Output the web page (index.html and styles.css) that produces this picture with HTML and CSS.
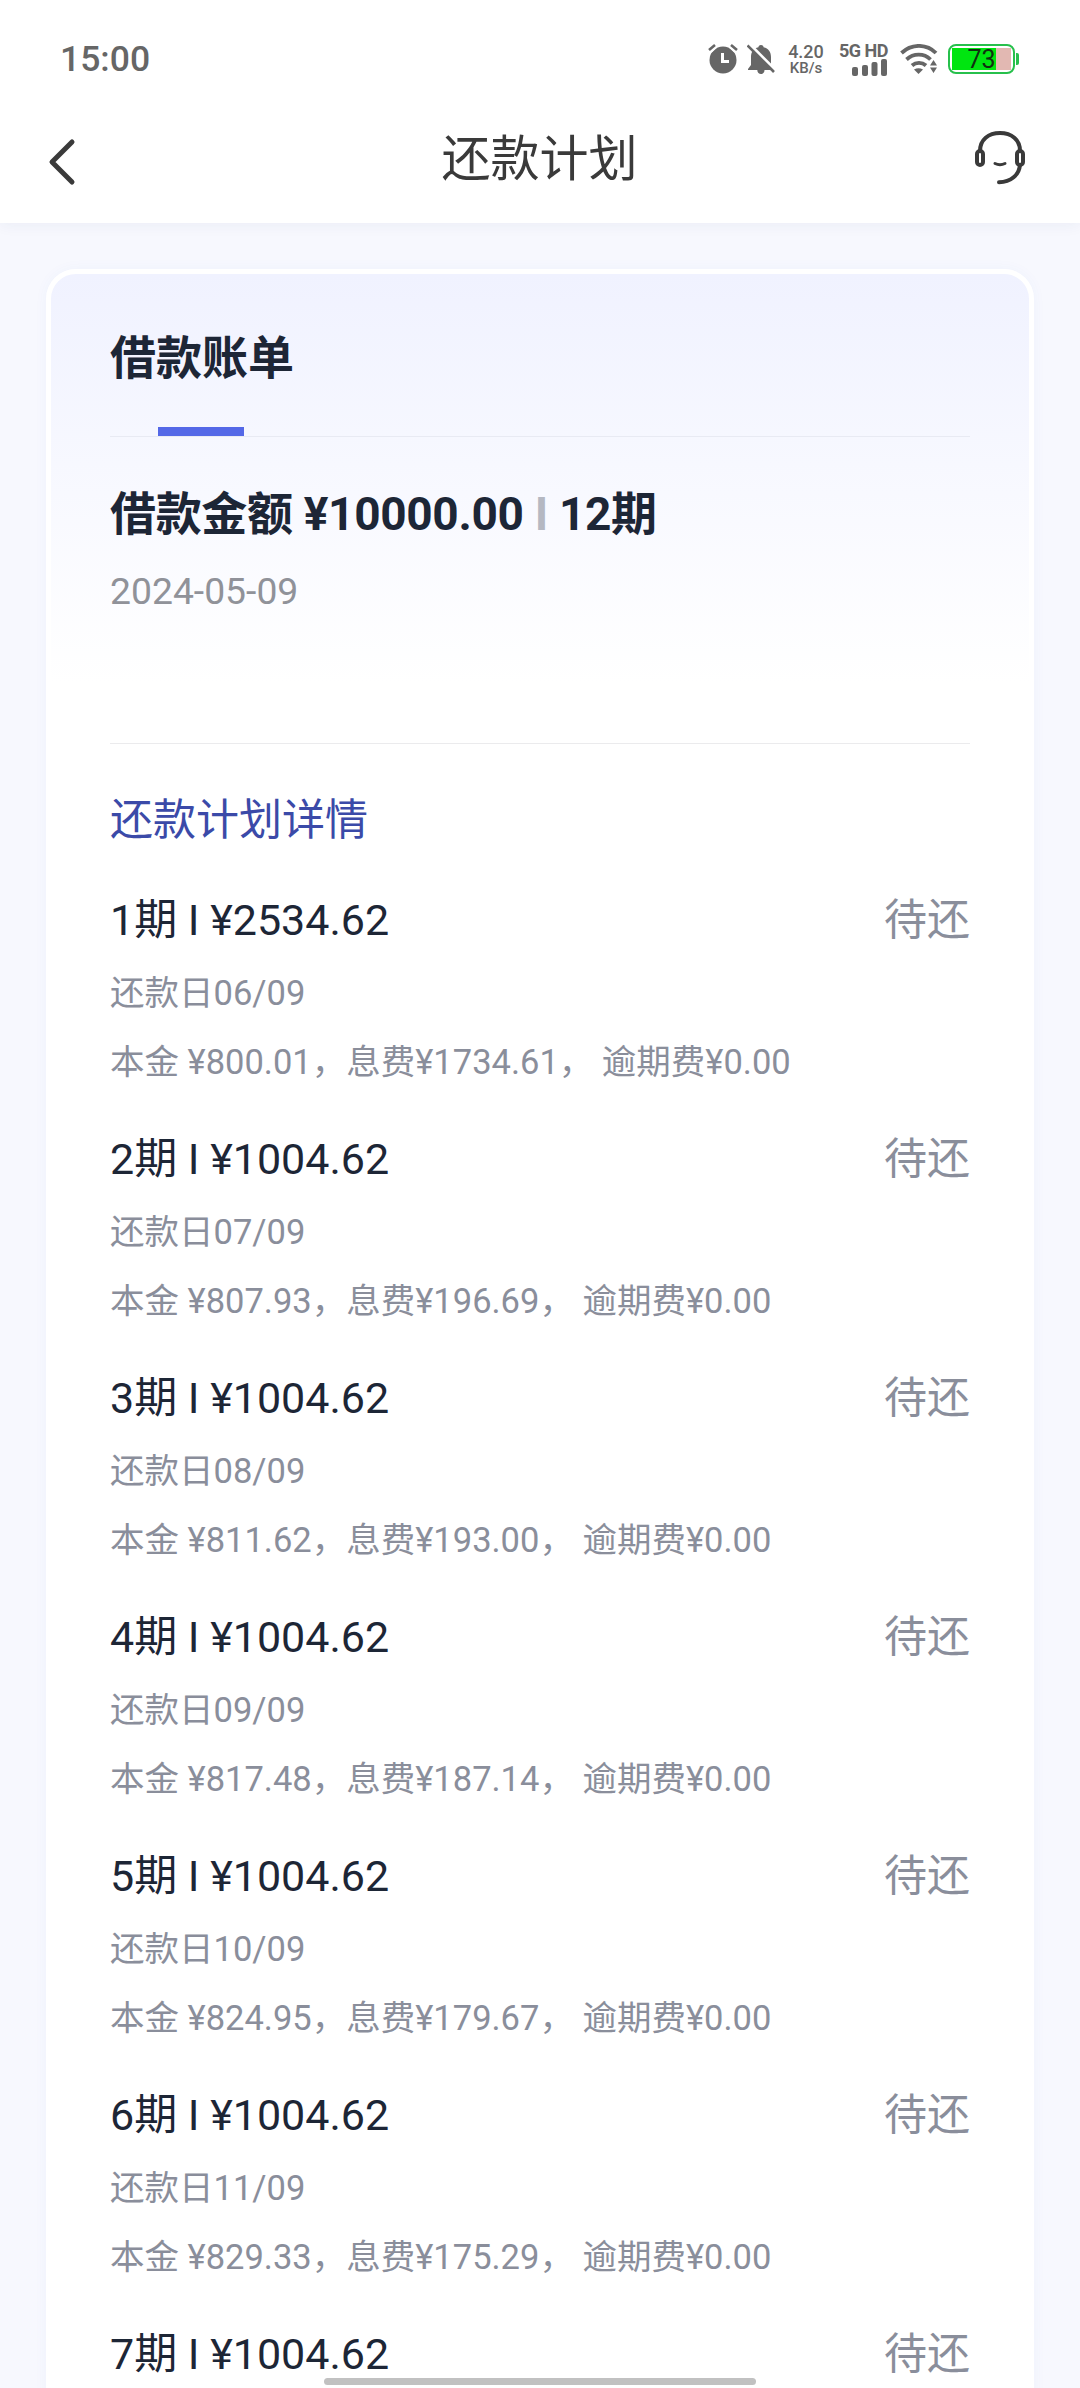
FILE: index.html
```html
<!DOCTYPE html>
<html lang="zh-CN">
<head>
    <meta charset="UTF-8">
    <meta name="viewport" content="width=device-width, initial-scale=1.0">
    <title>还款计划</title>
    <link rel="stylesheet" href="styles.css">
</head>
<body>
    <header class="header">
        <div class="status-bar">
            <span class="time">15:00</span>
            <div class="status-icons">
                <svg class="alarm" width="30" height="30" viewBox="0 0 30 30">
                    <circle cx="15" cy="16" r="13.5" fill="#666"/>
                    <path d="M1.5 6.5 7 1.5M28.5 6.5 23 1.5" stroke="#fff" stroke-width="6"/>
                    <path d="M1 6 7 1M29 6 23 1" stroke="#666" stroke-width="2.6"/>
                    <path d="M14.5 9v8.5H21" stroke="#fff" stroke-width="3" fill="none"/>
                </svg>
                <svg class="bell" width="28" height="31" viewBox="0 0 28 31">
                    <path d="M14 1c1.8 0 2.5 1 2.6 2.3C21.500 4.500 24 8 24 13v8l3 4v1H17.500c0 2.500-1.500 4-3.500 4s-3.700-1.500-3.700-4H1v-1l3-4v-8c0-5 2.500-8.500 7.400-9.700C11.500 2 12.200 1 14 1z" fill="#666"/>
                    <path d="M2.500 0 29.500 27" stroke="#fff" stroke-width="3"/>
                    <path d="M0.500 1.500 27 28" stroke="#666" stroke-width="2.6"/>
                </svg>
                <div class="speed"><span class="speed-num">4.20</span><span class="speed-unit">KB/s</span></div>
                <div class="signal">
                    <span class="signal-text">5G HD</span>
                    <svg width="36" height="17" viewBox="0 0 36 17" fill="#666">
                        <rect x="0" y="8" width="6" height="9" rx="2"/>
                        <rect x="10" y="6" width="6" height="11" rx="2"/>
                        <rect x="19.500" y="3" width="6" height="14" rx="2"/>
                        <rect x="29" y="0" width="6" height="17" rx="2"/>
                    </svg>
                </div>
                <svg class="wifi" width="38" height="30" viewBox="0 0 38 30">
                    <path d="M1.500 9C11.500-.5 26.500-.5 36 9M6.500 15.500C13.500 9 24 9 30.500 15.500M12 21.500c4-3.500 10-3.500 14 0" fill="none" stroke="#666" stroke-width="3.800"/>
                    <path d="M14 25.500q4.500-2.500 9 0L18.500 30z" fill="#666"/>
                    <path d="M28.500 23 33.500 14 39 23z" fill="#fff"/>
                    <path d="M30 21.500 33.500 16 37 21.500zM30 23.500h7L33.500 29z" fill="#666"/>
                </svg>
                <div class="battery"><span class="battery-level">73</span></div>
            </div>
        </div>
        <div class="nav">
            <svg class="back" width="28" height="48" viewBox="0 0 28 48">
                <path d="M24 4 4 24l20 20" fill="none" stroke="#3a3a3a" stroke-width="5" stroke-linecap="round" stroke-linejoin="round"/>
            </svg>
            <h1>还款计划</h1>
            <svg class="service" width="52" height="56" viewBox="0 0 52 56" fill="none" stroke="#3a3a3a" stroke-width="4" stroke-linecap="round">
                <path d="M6 21C6 9.500 14.500 3 26 3s20 6.500 20 18M46 35c-1 10-9 17-21 17.300"/>
                <rect x="3" y="21" width="6" height="14" rx="3"/>
                <rect x="43" y="21" width="6" height="14" rx="3"/>
                <path d="M21 33.500q5 2.500 10 0" stroke-width="3"/>
            </svg>
        </div>
    </header>

    <main class="card">
        <div class="tab">
            <h2>借款账单</h2>
            <div class="tab-line"></div>
        </div>
        <section class="summary">
            <div class="amount">借款金额 ¥10000.00 <span class="divider">I</span> 12期</div>
            <div class="loan-date">2024-05-09</div>
        </section>
        <h3>还款计划详情</h3>
        <div class="plan">
            <div class="item">
                <div class="item-top"><span>1期 I ¥2534.62</span><span class="state">待还</span></div>
                <div class="due">还款日06/09</div>
                <div class="fees">本金 ¥800.01，息费¥1734.61， 逾期费¥0.00</div>
            </div>
            <div class="item">
                <div class="item-top"><span>2期 I ¥1004.62</span><span class="state">待还</span></div>
                <div class="due">还款日07/09</div>
                <div class="fees">本金 ¥807.93，息费¥196.69， 逾期费¥0.00</div>
            </div>
            <div class="item">
                <div class="item-top"><span>3期 I ¥1004.62</span><span class="state">待还</span></div>
                <div class="due">还款日08/09</div>
                <div class="fees">本金 ¥811.62，息费¥193.00， 逾期费¥0.00</div>
            </div>
            <div class="item">
                <div class="item-top"><span>4期 I ¥1004.62</span><span class="state">待还</span></div>
                <div class="due">还款日09/09</div>
                <div class="fees">本金 ¥817.48，息费¥187.14， 逾期费¥0.00</div>
            </div>
            <div class="item">
                <div class="item-top"><span>5期 I ¥1004.62</span><span class="state">待还</span></div>
                <div class="due">还款日10/09</div>
                <div class="fees">本金 ¥824.95，息费¥179.67， 逾期费¥0.00</div>
            </div>
            <div class="item">
                <div class="item-top"><span>6期 I ¥1004.62</span><span class="state">待还</span></div>
                <div class="due">还款日11/09</div>
                <div class="fees">本金 ¥829.33，息费¥175.29， 逾期费¥0.00</div>
            </div>
            <div class="item">
                <div class="item-top"><span>7期 I ¥1004.62</span><span class="state">待还</span></div>
            </div>
        </div>
    </main>
    <div class="home-bar"></div>
</body>
</html>
```
FILE: styles.css
```css
* {
    box-sizing: border-box;
    margin: 0;
    padding: 0;
}
body {
    font-family: Roboto, "Noto Sans CJK SC", sans-serif;
    background-color: #f7f8fe;
    color: #1d2636;
    height: 2388px;
    overflow: hidden;
}
svg {
    display: block;
    flex: none;
}
.header {
    height: 223px;
    background-color: #fff;
    box-shadow: 0 2px 14px rgba(40, 50, 100, 0.06);
}
.status-bar {
    display: flex;
    justify-content: space-between;
    height: 100px;
    padding: 34px 65px 0 60px;
}
.time {
    font-size: 35.5px;
    line-height: 50px;
    font-weight: 500;
    color: #666;
}
.status-icons {
    display: flex;
    align-items: center;
    height: 50px;
    color: #666;
}
.bell {
    margin-left: 9px;
}
.speed {
    display: flex;
    flex-direction: column;
    align-items: center;
    width: 36px;
    margin-left: 13px;
    font-weight: 500;
}
.speed-num {
    font-size: 18px;
    line-height: 18px;
}
.speed-unit {
    font-size: 15px;
    line-height: 15px;
}
.signal {
    display: flex;
    flex-direction: column;
    align-items: flex-end;
    width: 50px;
    margin-left: 14px;
}
.signal-text {
    font-size: 18px;
    line-height: 17px;
    font-weight: 700;
    letter-spacing: -0.5px;
    white-space: nowrap;
}
.wifi {
    margin-left: 12px;
}
.battery {
    display: flex;
    width: 67px;
    height: 30px;
    margin-left: 10px;
    padding: 2px;
    border: 2px solid #27c04c;
    border-radius: 8px;
    position: relative;
    background: linear-gradient(90deg, #00e510 44px, #e2b8b2 44px) 2px 2px / 59px 22px no-repeat;
}
.battery::after {
    content: "";
    position: absolute;
    right: -6px;
    top: 7px;
    width: 3px;
    height: 12px;
    border-radius: 0 2px 2px 0;
    background-color: #27c04c;
}
.battery-level {
    flex: 1;
    text-align: center;
    font-size: 25px;
    line-height: 23px;
    color: #103010;
}
.nav {
    display: flex;
    align-items: center;
    justify-content: space-between;
    height: 116px;
    padding: 0 54px 0 48px;
}
.nav h1 {
    flex: 1;
    padding: 3px 0 0 29px;
    text-align: center;
    font-size: 49px;
    line-height: 60px;
    font-weight: 400;
    color: #3a3a3a;
}
.back {
    margin-top: 8px;
}
.card {
    width: 988px;
    height: 2200px;
    margin: 46px auto 0;
    padding: 0 59px;
    border: 5px solid #fff;
    border-radius: 30px;
    background: linear-gradient(#f0f2ff 0, #fff 410px);
    box-shadow: 0 0 14px rgba(60, 90, 200, 0.04);
}
.tab {
    height: 163px;
    padding-top: 54px;
    border-bottom: 1px solid #e8eaf3;
}
.tab h2 {
    font-size: 46px;
    line-height: 60px;
    font-weight: 700;
}
.tab-line {
    width: 86px;
    height: 9px;
    margin: 39px 0 0 48px;
    background-color: #5468e7;
}
.summary {
    height: 307px;
    padding-top: 47px;
    border-bottom: 1px solid #ebebed;
}
.amount {
    font-size: 46px;
    line-height: 60px;
    font-weight: 700;
    letter-spacing: -0.33px;
}
.divider {
    color: #b5b8c2;
}
.loan-date {
    margin-top: 22px;
    font-size: 37.3px;
    line-height: 50px;
    color: #909299;
}
.card h3 {
    padding-top: 46px;
    font-size: 43px;
    line-height: 60px;
    font-weight: 400;
    color: #3b4aa8;
}
.plan {
    padding-top: 40px;
}
.item {
    height: 239px;
}
.item-top {
    display: flex;
    justify-content: space-between;
    font-size: 43px;
    line-height: 60px;
}
.state {
    color: #8a8e9b;
}
.due,
.fees {
    font-size: 34.5px;
    line-height: 50px;
    color: #8a8e9b;
}
.due {
    margin-top: 18px;
}
.fees {
    margin-top: 19px;
}
.home-bar {
    position: fixed;
    left: 324px;
    bottom: 3px;
    width: 432px;
    height: 7px;
    border-radius: 4px;
    background-color: #c1c1c1;
}
```
